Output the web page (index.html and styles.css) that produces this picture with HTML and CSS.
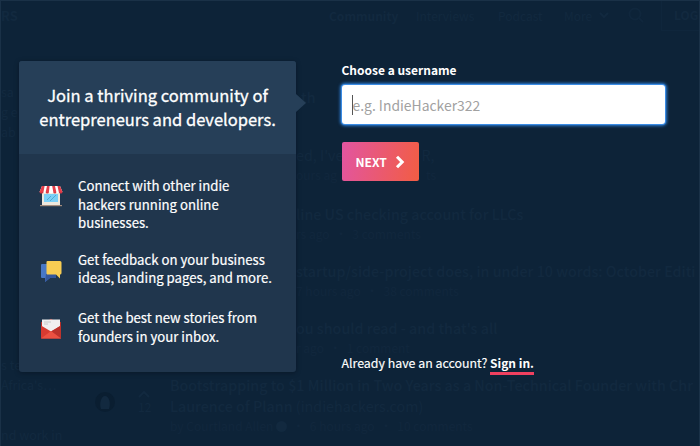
FILE: index.html
```html
<!DOCTYPE html>
<html lang="en">
<head>
<meta charset="utf-8">
<title>Join the community</title>
<link rel="stylesheet" href="styles.css">
</head>
<body>
<div class="page">
  <header class="nav">
    <b class="brand">RS</b><b class="nav-community">Community</b><span class="nav-interviews">Interviews</span><span class="nav-podcast">Podcast</span><span class="nav-more">More</span>
    <svg class="nav-chevron" viewBox="0 0 10 8"><path d="M1 2l4 4 4-4"/></svg>
    <svg class="nav-search" viewBox="0 0 16 16"><circle cx="7" cy="7" r="5.5"/><path d="M11 11l4 4"/></svg>
    <b class="login">LOG</b>
  </header>
  <div class="columns">
    <aside class="side">
      <p>sa</p><p>g e</p><p>ab</p>
      <p class="side-tech">s te</p><p>Africa's…</p><p class="side-work">nd work in</p>
    </aside>
    <main class="feed">
      <div class="post top"><h3>th</h3></div>
      <div class="post right clipped"><h3><span>ed, I've</span><span>R,</span></h3><p><span>ours ag</span><span>ts</span></p></div>
      <div class="post right"><h3>line US checking account for LLCs</h3><p>rs ago &nbsp;·&nbsp; 3 comments</p></div>
      <div class="post right"><h3>startup/side-project does, in under 10 words: October Editi</h3><p>7 hours ago &nbsp;·&nbsp; 38 comments</p></div>
      <div class="post right"><h3>ou should read - and that's all</h3><p>r ago &nbsp;·&nbsp; 1 comment</p></div>
      <div class="post full">
        <svg class="avatar" viewBox="0 0 20 20"><circle cx="10" cy="10" r="10"/><path d="M6 17c-2-5 0-13 4-13s6 7 4 13z"/></svg>
        <div class="votes"><svg viewBox="0 0 12 8"><path d="M1 7l5-5 5 5"/></svg><span>12</span></div>
        <div><h3>Bootstrapping to $1 Million in Two Years as a Non-Technical Founder with Chr</h3><h3>Laurence of Plann <span>(indiehackers.com)</span></h3><p>by Courtland Allen <i class="dot"></i> &nbsp;·&nbsp; 6 hours ago &nbsp;·&nbsp; 10 comments</p></div>
      </div>
    </main>
  </div>
</div>
<div class="modal">
  <section class="card">
    <h1>Join a thriving community of<br>entrepreneurs and developers.</h1>
    <ul>
      <li>
        <svg class="icon" viewBox="0 0 24 22"><path fill="#eee8dc" d="M3 7h18v13H3z"/><path fill="#7bd0f7" d="M5 9h14v8H5z"/><path stroke="#51a9d2" d="M8 15l4-4M11 16l6-6"/><path fill="#a58d7d" d="M1 20h22v1.2H1z"/><path fill="#fff" d="M3 1h18l2.5 6H.5z"/><path fill="#e63e49" d="M3 1h2.6L4.5 7h-4zM8 1h2.6L9.9 7H6.7zM13.2 1H16l1.3 6h-3zM18.5 1H21l2.5 6h-3.700z"/><path fill="#fff" d="M4.500 7h2.200a1.100 1.100 0 01-2.200 0M9.900 7h4.400a2.200 1.400 0 01-4.400 0M17.300 7h2.500a1.200 1.200 0 01-2.500 0"/><path fill="#d83543" d="M.5 7h4a2 1.500 0 01-4 0M6.700 7h3.200a1.600 1.500 0 01-3.200 0M14.300 7h3a1.500 1.500 0 01-3 0M19.800 7h3.700a1.800 1.500 0 01-3.700 0"/></svg>
        <p>Connect with other indie<br>hackers running online<br>businesses.</p>
      </li>
      <li>
        <svg class="icon" viewBox="0 0 24 22"><path fill="#4878c6" d="M3 4h14v14h-6l-5 4v-4H3q-1 0-1-1V5q0-1 1-1z"/><path fill="#35579b" d="M7 14h10v4h-6l-5 4z"/><path fill="#f8cd53" d="M8.500 1H21q1.500 0 1.500 1.500V13q0 1.500-1.500 1.500v4l-4-4H8.500Q7.500 14.500 7.500 13V2q0-1 1-1z"/></svg>
        <p>Get feedback on your business<br>ideas, landing pages, and more.</p>
      </li>
      <li>
        <svg class="icon" viewBox="0 0 24 22"><path fill="#b52f29" d="M10 2L12 .8 14 2zM2 4h20v16H2z"/><path fill="#f1f1f1" d="M3 1.500h18V17H3z"/><path stroke="#cacaca" d="M5 4h7M5 6h4"/><path fill="#d83b31" d="M2 7.500l10 6 10-6v13H2z"/><path fill="#bd332c" d="M22 7.500v13L12 13.500z"/><path fill="#ec5142" d="M2 20.500L12 13l10 7.500z"/></svg>
        <p>Get the best new stories from<br>founders in your inbox.</p>
      </li>
    </ul>
  </section>
  <section class="form">
    <label for="username">Choose a username</label>
    <div class="field"><i class="caret"></i><input id="username" placeholder="e.g. IndieHacker322"></div>
    <button><span>NEXT</span><svg viewBox="0 0 10 14"><path d="M2 1.800L7.200 7 2 12.200"/></svg></button>
    <p class="signin">Already have an account? <a>Sign in.</a></p>
  </section>
</div>
</body>
</html>
```
FILE: styles.css
```css
* { box-sizing: border-box; }
body, h1, h3, p, ul { margin: 0; padding: 0; }
body {
  position: relative;
  width: 700px;
  height: 446px;
  overflow: hidden;
  background: #0d2338;
  font-family: "Noto Sans CJK SC", "Noto Sans", sans-serif;
  color: #fff;
}
svg { display: block; flex: none; }

/* dimmed page behind the dialog */
.page {
  position: absolute;
  inset: 0;
  overflow: hidden;
  border: 1px solid #1a3147;
  border-bottom: 0;
  color: #12293f;
  white-space: nowrap;
}
.page svg { fill: none; stroke: #12293f; stroke-width: 2; }
.nav { display: flex; align-items: center; height: 28px; font-size: 12px; }
.nav > * { flex: none; }
.brand { width: 328px; font-size: 13px; }
.nav-community { width: 87px; }
.nav-interviews { width: 82px; }
.nav-podcast { width: 66px; }
.nav-more { width: 35px; }
.nav-chevron { width: 10px; height: 8px; }
.nav .nav-search { width: 16px; height: 16px; margin-left: 19px; stroke: #10273d; }
.login { width: 60px; margin-left: 17px; padding: 0 12px; border: 1px solid #0f263c; line-height: 30px; height: 32px; }
.columns { display: flex; padding-top: 53px; }
.side { flex: none; width: 94px; font-size: 12.500px; line-height: 20px; }
.side .side-tech { margin-top: 213px; }
.side .side-work { margin-top: 31px; line-height: 18px; }
.feed { flex: none; width: 660px; }
.post { height: 57px; font-size: 12px; line-height: 20px; }
.post p { color: #11273d; }
.post h3 { font-size: 14.300px; line-height: 21px; font-weight: 500; }
.post h3 span { font-weight: 400; }
.right { padding-left: 201px; }
.clipped h3, .clipped p { display: flex; gap: 78px; }
.clipped p { gap: 89px; }
.top { padding: 4px 0 0 206px; height: 62px; }
.post.clipped { height: 59px; }
.full { display: flex; height: 80px; }
.page .avatar { width: 20px; height: 20px; margin-top: 18px; fill: #0a1e31; stroke: none; }
.page .avatar path { fill: #12293f; }
.votes { flex: none; width: 55px; padding: 16px 0 0 23px; }
.votes svg { width: 12px; height: 8px; }
.votes span { display: block; line-height: 18px; }
.dot { display: inline-block; width: 11px; height: 11px; border-radius: 50%; background: #12293f; vertical-align: -1px; }

.modal { position: relative; display: flex; padding: 61px 0 0 19px; }
.card {
  position: relative;
  width: 277px;
  height: 311px;
  border-radius: 3px;
  background: #20364d;
  box-shadow: 0 1px 5px rgba(0, 5, 15, .35);
}
.card::after {
  content: "";
  position: absolute;
  left: 277px;
  top: 33px;
  border: 9px solid transparent;
  border-left: 10px solid #263f58;
  border-right: 0;
}
h1 {
  height: 93px;
  padding-top: 22px;
  border-radius: 3px 3px 0 0;
  background: #263f58;
  text-align: center;
  font-size: 16.500px;
  line-height: 24.300px;
  font-weight: 400;
  -webkit-text-stroke: .3px #fff;
  white-space: nowrap;
}
ul { list-style: none; padding: 23px 0 0 20px; }
li { display: flex; margin-bottom: 18.200px; }
li + li { margin-bottom: 21.800px; }
.icon { width: 24px; height: 22px; margin: 8px 15px 0 0; }
li + li .icon { margin-top: 9px; }
li p { font-size: 13.200px; line-height: 18.500px; white-space: nowrap; -webkit-text-stroke: .2px #fff; }
.form { width: 323.500px; margin-left: 45.500px; }
label { display: block; height: 24px; font-size: 12px; line-height: 18px; font-weight: 700; }
.field {
  display: flex;
  align-items: center;
  height: 39px;
  padding-left: 10px;
  border-radius: 3px;
  background: #fff;
  box-shadow: 0 0 0 1px #3b8ce4, 0 0 3px 2px #2b7bd2;
}
.caret { width: 1px; height: 20px; background: #555; }
input {
  width: 290px;
  padding: 0;
  border: 0;
  outline: 0;
  background: none;
  font: 13.900px "Noto Sans CJK SC", sans-serif;
}
input::placeholder { color: #a1a1a1; opacity: 1; }
button {
  display: flex;
  align-items: center;
  width: 77.500px;
  height: 39px;
  margin-top: 18px;
  padding: 0 0 0 14px;
  border: 0;
  border-radius: 2px;
  background: linear-gradient(100deg, #e255a1, #f25d43);
  color: #fff;
  font: 700 12.100px "Noto Sans CJK SC", sans-serif;
}
button svg { width: 10px; height: 14px; margin-left: 8px; fill: none; stroke: #fff; stroke-width: 3; }
.signin { margin-top: 172px; font-size: 12.380px; line-height: 20px; white-space: nowrap; -webkit-text-stroke: .15px #fff; }
.signin a { display: inline-block; height: 22px; border-bottom: 3px solid #f0405f; font-size: 12px; font-weight: 700; -webkit-text-stroke: 0; }
```
